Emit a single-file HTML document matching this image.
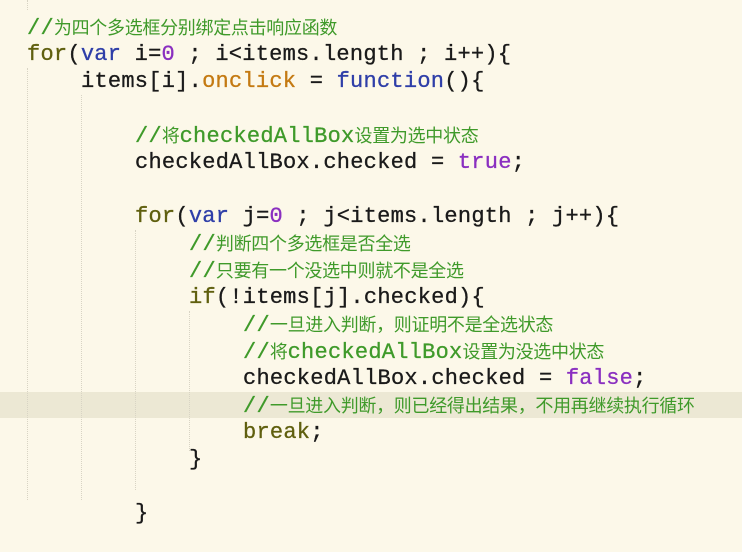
<!DOCTYPE html>
<html><head><meta charset="utf-8"><style>
html,body{margin:0;padding:0;}
body{width:742px;height:552px;overflow:hidden;background:#fcf8e9;position:relative;font-family:"Liberation Mono","Noto Sans CJK SC",monospace;font-size:22px;color:#1a1a1a;}
.l{position:absolute;left:0;height:27px;line-height:27px;white-space:pre;letter-spacing:0.25px;-webkit-text-stroke:0.3px currentColor;}
.hl{position:absolute;left:0;top:392px;width:742px;height:26px;background:#ece8d4;}
.g{position:absolute;width:0;border-left:1px dotted #d8d4c4;}
.k{color:#5f5f0e}.v{color:#2e3ea8}.n{color:#8a2fc0}.o{color:#c47a12}.c{color:#3f9a2a}
.z{font-family:"Noto Sans CJK SC",sans-serif;font-size:18px;letter-spacing:-0.3px;-webkit-text-stroke:0;}
</style></head><body>
<div class="hl"></div>
<div class="g" style="left:27px;top:0;height:10px"></div>
<div class="g" style="left:27px;top:68px;height:432px"></div>
<div class="g" style="left:81px;top:95px;height:405px"></div>
<div class="g" style="left:135px;top:230px;height:260px"></div>
<div class="g" style="left:189px;top:311px;height:140px"></div>
<div class="l" style="top:14px;left:27px"><span class="c">//<span class="z">为四个多选框分别绑定点击响应函数</span></span></div>
<div class="l" style="top:41px;left:27px"><span class="k">for</span>(<span class="v">var</span> i=<span class="n">0</span> ; i&lt;items.length ; i++){</div>
<div class="l" style="top:68px;left:81px">items[i].<span class="o">onclick</span> = <span class="v">function</span>(){</div>
<div class="l" style="top:122px;left:135px"><span class="c">//<span class="z">将</span>checkedAllBox<span class="z">设置为选中状态</span></span></div>
<div class="l" style="top:149px;left:135px">checkedAllBox.checked = <span class="n">true</span>;</div>
<div class="l" style="top:203px;left:135px"><span class="k">for</span>(<span class="v">var</span> j=<span class="n">0</span> ; j&lt;items.length ; j++){</div>
<div class="l" style="top:230px;left:189px"><span class="c">//<span class="z">判断四个多选框是否全选</span></span></div>
<div class="l" style="top:257px;left:189px"><span class="c">//<span class="z">只要有一个没选中则就不是全选</span></span></div>
<div class="l" style="top:284px;left:189px"><span class="k">if</span>(!items[j].checked){</div>
<div class="l" style="top:311px;left:243px"><span class="c">//<span class="z">一旦进入判断，则证明不是全选状态</span></span></div>
<div class="l" style="top:338px;left:243px"><span class="c">//<span class="z">将</span>checkedAllBox<span class="z">设置为没选中状态</span></span></div>
<div class="l" style="top:365px;left:243px">checkedAllBox.checked = <span class="n">false</span>;</div>
<div class="l" style="top:392px;left:243px"><span class="c">//<span class="z">一旦进入判断，则已经得出结果，不用再继续执行循环</span></span></div>
<div class="l" style="top:419px;left:243px"><span class="k">break</span>;</div>
<div class="l" style="top:446px;left:189px">}</div>
<div class="l" style="top:500px;left:135px">}</div>
</body></html>
